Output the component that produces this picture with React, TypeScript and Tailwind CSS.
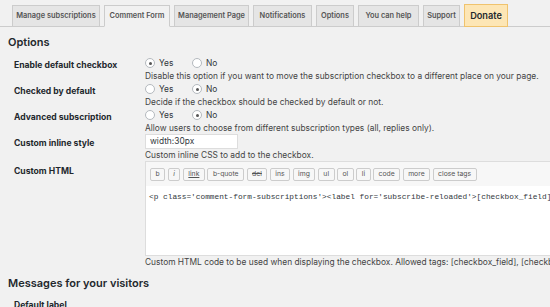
import React from 'react';

const tabs = [
  { label: 'Manage subscriptions', w: 'w-[88px]' },
  { label: 'Comment Form', w: 'w-[66px]', active: true },
  { label: 'Management Page', w: 'w-[75px]' },
  { label: 'Notifications', w: 'w-[59px]' },
  { label: 'Options', w: 'w-[38px]' },
  { label: 'You can help', w: 'w-[61px]' },
  { label: 'Support', w: 'w-[37px]' },
];

const Radio = ({ checked }: { checked?: boolean }) => (
  <span className="flex h-[10px] w-[10px] items-center justify-center rounded-full border border-[#b4b9be] bg-white">
    {checked && <span className="h-[3px] w-[3px] rounded-full bg-[#555]" />}
  </span>
);

const RadioPair = ({ yes }: { yes: boolean }) => (
  <div className="flex h-[14px] items-center text-[8.4px] text-[#32373c]">
    <Radio checked={yes} />
    <span className="ml-[4px] w-[33px]">Yes</span>
    <Radio checked={!yes} />
    <span className="ml-[4px]">No</span>
  </div>
);

const Row = ({
  label,
  children,
  desc,
}: {
  label: string;
  children: React.ReactNode;
  desc: string;
}) => (
  <div className="flex">
    <div className="w-[137px] shrink-0 pl-[6px] pt-[4px] text-[8.6px] font-bold leading-[10px] text-[#23282d]">
      {label}
    </div>
    <div className="min-w-0 flex-1">
      {children}
      <div className="h-[12px] whitespace-nowrap text-[8.4px] leading-[12px] text-[#444]">
        {desc}
      </div>
    </div>
  </div>
);

const toolbar = ['b', 'i', 'link', 'b-quote', 'del', 'ins', 'img', 'ul', 'ol', 'li', 'code', 'more', 'close tags'];

export default function App() {
  return (
    <div className="h-[307px] w-[550px] overflow-hidden bg-[#f1f1f1] font-['Inter','Liberation_Sans',sans-serif]">
      {/* tabs */}
      <div className="flex h-[27px] items-end gap-[4px] border-b border-[#ccc] pl-[12px] pt-[4px]">
        {tabs.map(t => (
          <div
            key={t.label}
            className={`-mb-px flex h-[22px] ${t.w} items-center justify-center border border-[#ccc] text-[7.4px] font-semibold whitespace-nowrap text-[#555] ${
              t.active ? 'border-b-[#f1f1f1] bg-[#f1f1f1] text-[#000]' : 'bg-[#e5e5e5]'
            }`}
          >
            {t.label}
          </div>
        ))}
        <div className="-mb-px flex h-[23px] w-[44px] items-center justify-center border border-[#f0c36d] bg-[#fde6b5] text-[9.2px] font-semibold text-[#23282d]">
          Donate
        </div>
      </div>

      <div className="px-[8px]">
        <h2 className="pt-[8px] text-[11px] font-semibold leading-[14px] text-[#23282d]">Options</h2>

        <div className="mt-[7px]">
          <Row
            label="Enable default checkbox"
            desc="Disable this option if you want to move the subscription checkbox to a different place on your page."
          >
            <RadioPair yes />
          </Row>
          <Row label="Checked by default" desc="Decide if the checkbox should be checked by default or not.">
            <RadioPair yes={false} />
          </Row>
          <Row
            label="Advanced subscription"
            desc="Allow users to choose from different subscription types (all, replies only)."
          >
            <RadioPair yes={false} />
          </Row>
          <Row label="Custom inline style" desc="Custom inline CSS to add to the checkbox.">
            <div className="flex h-[15px] w-[93px] items-center border border-[#ddd] bg-white px-[4px] text-[8.4px] text-[#32373c]">
              width:30px
            </div>
          </Row>

          <div className="flex">
            <div className="w-[137px] shrink-0 pl-[6px] pt-[5px] text-[8.6px] font-bold leading-[10px] text-[#23282d]">
              Custom HTML
            </div>
            <div className="min-w-0 flex-1">
              <div className="-mr-[8px] border border-r-0 border-[#ddd]">
                <div className="flex h-[24px] items-center gap-[2.5px] bg-[#f7f7f7] px-[4px]">
                  {toolbar.map(b => (
                    <span
                      key={b}
                      className={`flex h-[13px] items-center rounded-[2px] border border-[#ccc] bg-[#f7f7f7] px-[4.5px] text-[6.8px] text-[#555] ${
                        b === 'link' ? 'underline' : ''
                      } ${b === 'i' ? 'italic' : ''} ${b === 'del' ? 'line-through' : ''}`}
                    >
                      {b}
                    </span>
                  ))}
                </div>
                <div className="h-[69px] whitespace-nowrap bg-white px-[3px] pt-[6px] font-['Liberation_Mono','DejaVu_Sans_Mono',monospace] text-[7.8px] text-[#32373c]">
                  {"<p class='comment-form-subscriptions'><label for='subscribe-reloaded'>[checkbox_field]"}
                </div>
              </div>
              <div className="h-[12px] whitespace-nowrap text-[8.4px] leading-[12px] text-[#444]">
                Custom HTML code to be used when displaying the checkbox. Allowed tags: [checkbox_field], [checkbox_label]
              </div>
            </div>
          </div>
        </div>

        <h2 className="mt-[8px] text-[11px] font-semibold leading-[14px] text-[#23282d]">
          Messages for your visitors
        </h2>
        <div className="mt-[10px] pl-[6px] text-[8.6px] font-bold leading-[10px] text-[#23282d]">Default label</div>
      </div>
    </div>
  );
}
